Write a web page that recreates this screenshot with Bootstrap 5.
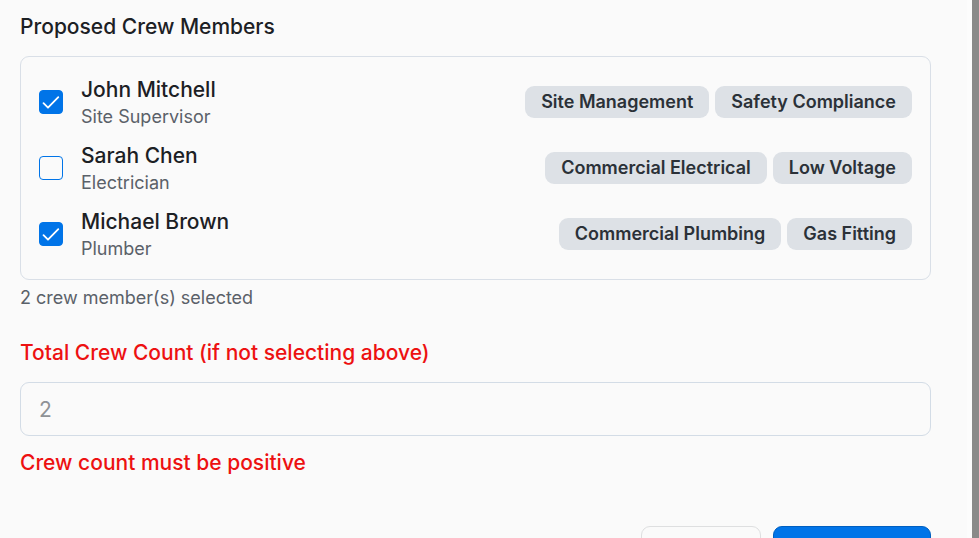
<!DOCTYPE html>
<html lang="en">
<head>
<meta charset="utf-8">
<meta name="viewport" content="width=device-width, initial-scale=1">
<title>Proposed Crew Members</title>
<link href="https://cdn.jsdelivr.net/npm/bootstrap@5.3.0/dist/css/bootstrap.min.css" rel="stylesheet">
<style>
  body { font-family: Inter, "Liberation Sans", sans-serif; font-size: 21px; line-height: 27px; background: #8a8a89; color: #1c2024; }
  .dialog-panel { background: #fafafa; margin-right: 7px; padding: 13px 36px 24px 20px; border-right: 5px solid #fcfcfc; }
  .field-title { font-size: 21px; line-height: 27px; font-weight: 500; margin-bottom: 16px; }
  .crew-box { border: 1px solid #d9dfe7; border-radius: 9px; padding: 17px 18px; gap: 10px; }
  .crew-item { gap: 18px; }
  .crew-label { padding-top: 2px; }
  .crew-name { font-weight: 500; }
  .muted-note { font-size: 18px; line-height: 27px; color: #5a6169; }
  .crew-check.form-check-input { width: 24px; height: 24px; border: 1px solid #0074e8; border-radius: 4px; background-color: transparent; }
  .crew-check.form-check-input:checked { background-color: #0074e8; background-size: 18px 18px;
    background-image: url("data:image/svg+xml,%3Csvg xmlns='http://www.w3.org/2000/svg' viewBox='0 0 18 18'%3E%3Cpath d='M1.5 10.2L6 14.7L16.3 4.2' fill='none' stroke='white' stroke-width='1.8' stroke-linecap='round' stroke-linejoin='round'/%3E%3C/svg%3E"); }
  .skill-list { gap: 6px; }
  .skill-tag { font-size: 18px; line-height: 24px; font-weight: 600; color: #2b3138; background: #dde1e6; border-radius: 9px; padding: 4px 16px; }
  .crew-summary { margin-top: 4px; margin-bottom: 28px; }
  .field-error { color: #ed1111; }
  .count-input.form-control { height: 54px; font-size: 21px; border: 1px solid #d3dce6; border-radius: 9px; padding: 12px 18px; background: transparent; }
  .count-input::placeholder { color: #8f9296; }
  .error-note { margin-top: 13px; margin-bottom: 50px; font-weight: 500; }
  .form-actions { gap: 12px; }
  .form-action { height: 54px; min-width: 120px; border-radius: 9px; border: 1px solid #dedfe0; }
  .form-action-main { min-width: 158px; background: #0074e8; border-color: #005fc0; }
</style>
<script src="https://cdn.jsdelivr.net/npm/bootstrap@5.3.0/dist/js/bootstrap.bundle.min.js"></script>
</head>
<body class="vh-100 overflow-hidden">
<main class="dialog-panel min-vh-100">
  <form novalidate>
    <fieldset>
      <legend class="field-title">Proposed Crew Members</legend>
      <div class="crew-box d-flex flex-column">
        <div class="crew-item d-flex align-items-center">
          <input class="crew-check form-check-input flex-shrink-0 m-0" type="checkbox" id="crew-john" checked>
          <label class="crew-label flex-grow-1" for="crew-john"><span class="crew-name d-block">John Mitchell</span><span class="muted-note d-block">Site Supervisor</span></label>
          <div class="skill-list d-flex"><span class="skill-tag">Site Management</span><span class="skill-tag">Safety Compliance</span></div>
        </div>
        <div class="crew-item d-flex align-items-center">
          <input class="crew-check form-check-input flex-shrink-0 m-0" type="checkbox" id="crew-sarah">
          <label class="crew-label flex-grow-1" for="crew-sarah"><span class="crew-name d-block">Sarah Chen</span><span class="muted-note d-block">Electrician</span></label>
          <div class="skill-list d-flex"><span class="skill-tag">Commercial Electrical</span><span class="skill-tag">Low Voltage</span></div>
        </div>
        <div class="crew-item d-flex align-items-center">
          <input class="crew-check form-check-input flex-shrink-0 m-0" type="checkbox" id="crew-michael" checked>
          <label class="crew-label flex-grow-1" for="crew-michael"><span class="crew-name d-block">Michael Brown</span><span class="muted-note d-block">Plumber</span></label>
          <div class="skill-list d-flex"><span class="skill-tag">Commercial Plumbing</span><span class="skill-tag">Gas Fitting</span></div>
        </div>
      </div>
      <p class="crew-summary muted-note">2 crew member(s) selected</p>
    </fieldset>
    <label class="field-title field-error d-block" for="crew-count">Total Crew Count (if not selecting above)</label>
    <input class="count-input form-control" type="text" inputmode="numeric" id="crew-count" placeholder="2" aria-describedby="crew-count-error">
    <p class="error-note field-error" id="crew-count-error">Crew count must be positive</p>
    <div class="form-actions d-flex justify-content-end">
      <button type="button" class="form-action btn" aria-label="Cancel"></button>
      <button type="submit" class="form-action form-action-main btn btn-primary" aria-label="Submit"></button>
    </div>
  </form>
</main>
</body>
</html>
